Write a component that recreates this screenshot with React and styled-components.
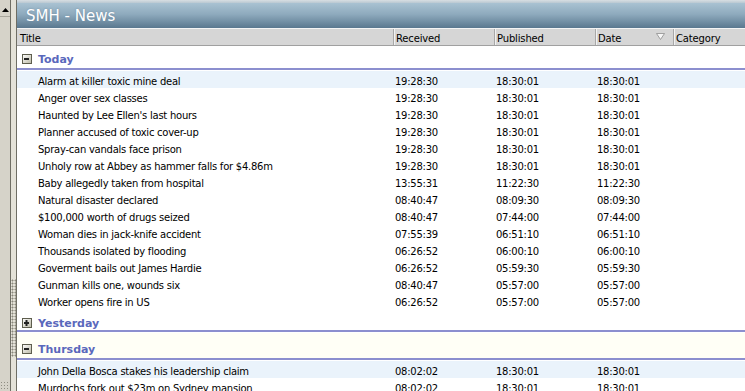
import React from "react";
import styled, { createGlobalStyle } from "styled-components";

const Global = createGlobalStyle`
  html, body { margin: 0; padding: 0; background: #fff; overflow: hidden; }
  body { font-family: "DejaVu Sans", "Liberation Sans", sans-serif; }
`;

const Shell = styled.div`
  display: flex;
  width: 745px;
  height: 391px;
  overflow: hidden;
`;

const SideStrip = styled.div`
  width: 10px;
  background: #d6d3c9;
  display: flex;
  flex-direction: column;
  justify-content: space-between;
  border-right: 1px solid #6f6e64;
`;

const ScrollBtn = styled.div`
  height: 12px;
  display: flex;
  align-items: center;
  justify-content: center;
  border-bottom: 1px solid #a8a69c;
  margin-top: 4px;
`;

const SizeGrip = styled.div`
  height: 10px;
  background-image: radial-gradient(circle, #8f8d82 0.7px, transparent 1px);
  background-size: 3px 3px;
`;

const Splitter = styled.div`
  width: 5px;
  background: #e4e2d8;
  border-right: 1px solid #6f6e64;
  display: flex;
  flex-direction: column;
  justify-content: flex-end;
  padding-bottom: 34px;
`;

const Grip = styled.div`
  height: 78px;
  background-image: radial-gradient(circle, #8a887c 0.9px, transparent 1.1px);
  background-size: 3px 3px;
`;

const Panel = styled.div`
  flex: 1;
  display: flex;
  flex-direction: column;
  min-width: 0;
`;

const TopBand = styled.div`
  height: 3px;
  flex-shrink: 0;
  background: linear-gradient(#d8dee2, #b9c8d2);
`;

const TitleBar = styled.div`
  height: 25px;
  flex-shrink: 0;
  background: linear-gradient(#a9c2d2 0%, #8eaabd 45%, #5a788f 100%);
  display: flex;
  align-items: center;
  padding-left: 9px;
  color: #fff;
  font-family: "DejaVu Sans", sans-serif;
  font-size: 15px;
  text-shadow: 0 0 2px #6d8aa0;
`;

const cols = "376px 101px 101px 78px 1fr";

const HeaderRow = styled.div`
  display: grid;
  flex-shrink: 0;
  grid-template-columns: ${cols};
  height: 16px;
  background: #d6d6d6;
  border-top: 1px solid #f4f4f4;
  border-bottom: 1px solid #a0a0a0;
  font-size: 10px;
  letter-spacing: -0.15px;
  color: #000;
`;

const HeaderCell = styled.div`
  display: flex;
  align-items: center;
  padding: 2px 0 0 ${(p) => (p.$first ? 3 : 2)}px;
  border-left: ${(p) => (p.$first ? "none" : "1px solid #a8a8a8")};
  box-shadow: ${(p) => (p.$first ? "none" : "inset 1px 0 0 #f2f2f2")};
  position: relative;
`;

const SortIcon = styled.svg`
  position: absolute;
  right: 8px;
  top: 4px;
`;

const Body = styled.div`
  display: flex;
  flex-direction: column;
  font-size: 10px;
  letter-spacing: -0.25px;
  color: #000;
`;

const GroupRow = styled.div`
  height: ${(p) => p.$h}px;
  flex-shrink: 0;
  display: flex;
  align-items: flex-end;
  padding: 0 0 ${(p) => p.$pb}px 5px;
  margin-bottom: 1px;
  gap: 6px;
  box-sizing: border-box;
  border-bottom: 2px solid #8c8fcf;
  background: ${(p) => (p.$tint ? "#fffff6" : "#fff")};
  letter-spacing: 0;
`;

const Toggle = styled.svg`
  flex-shrink: 0;
  margin-bottom: 2px;
`;

const GroupLabel = styled.span`
  font-weight: bold;
  font-size: 11px;
  color: #5a68bc;
`;

const Row = styled.div`
  display: grid;
  flex-shrink: 0;
  grid-template-columns: ${cols};
  height: 17px;
  box-sizing: border-box;
  padding-top: 3px;
  align-items: center;
  background: ${(p) => (p.$hl ? "#eaf3fb" : "#fff")};
`;

const Cell = styled.div`
  padding-left: ${(p) => (p.$first ? 21 : 2)}px;
  white-space: nowrap;
  overflow: visible;
`;

const today = [
  ["Alarm at killer toxic mine deal", "19:28:30", "18:30:01", "18:30:01"],
  ["Anger over sex classes", "19:28:30", "18:30:01", "18:30:01"],
  ["Haunted by Lee Ellen's last hours", "19:28:30", "18:30:01", "18:30:01"],
  ["Planner accused of toxic cover-up", "19:28:30", "18:30:01", "18:30:01"],
  ["Spray-can vandals face prison", "19:28:30", "18:30:01", "18:30:01"],
  ["Unholy row at Abbey as hammer falls for $4.86m", "19:28:30", "18:30:01", "18:30:01"],
  ["Baby allegedly taken from hospital", "13:55:31", "11:22:30", "11:22:30"],
  ["Natural disaster declared", "08:40:47", "08:09:30", "08:09:30"],
  ["$100,000 worth of drugs seized", "08:40:47", "07:44:00", "07:44:00"],
  ["Woman dies in jack-knife accident", "07:55:39", "06:51:10", "06:51:10"],
  ["Thousands isolated by flooding", "06:26:52", "06:00:10", "06:00:10"],
  ["Goverment bails out James Hardie", "06:26:52", "05:59:30", "05:59:30"],
  ["Gunman kills one, wounds six", "08:40:47", "05:57:00", "05:57:00"],
  ["Worker opens fire in US", "06:26:52", "05:57:00", "05:57:00"],
];

const thursday = [
  ["John Della Bosca stakes his leadership claim", "08:02:02", "18:30:01", "18:30:01"],
  ["Murdochs fork out $23m on Sydney mansion", "08:02:02", "18:30:01", "18:30:01"],
];

function Rows({ data }) {
  return data.map((r, i) => (
    <Row key={i} $hl={i === 0}>
      <Cell $first>{r[0]}</Cell>
      <Cell>{r[1]}</Cell>
      <Cell>{r[2]}</Cell>
      <Cell>{r[3]}</Cell>
      <Cell />
    </Row>
  ));
}

function ToggleIcon({ open }) {
  return (
    <Toggle width="10" height="10" viewBox="0 0 10 10">
      <defs>
        <linearGradient id={open ? "tgo" : "tgc"} x1="0" y1="0" x2="1" y2="1">
          <stop offset="0" stopColor="#ffffff" />
          <stop offset="1" stopColor="#b9b7a4" />
        </linearGradient>
      </defs>
      <rect x="0.5" y="0.5" width="9" height="9" fill={`url(#${open ? "tgo" : "tgc"})`} stroke="#5e5e4e" />
      <rect x="2" y="4" width="5" height="2" fill="#222" />
      {!open && <rect x="3.5" y="2" width="2" height="6" fill="#222" />}
    </Toggle>
  );
}

function Group({ label, open, h, pb, tint }) {
  return (
    <GroupRow $h={h} $pb={pb} $tint={tint}>
      <ToggleIcon open={open} />
      <GroupLabel>{label}</GroupLabel>
    </GroupRow>
  );
}

export default function App() {
  return (
    <>
      <Global />
      <Shell>
        <SideStrip>
          <ScrollBtn>
            <svg width="7" height="4" viewBox="0 0 7 4">
              <path d="M0 4 L3.5 0 L7 4 Z" fill="#000" />
            </svg>
          </ScrollBtn>
          <SizeGrip />
        </SideStrip>
        <Splitter>
          <Grip />
        </Splitter>
        <Panel>
          <TopBand />
          <TitleBar>SMH - News</TitleBar>
          <HeaderRow>
            <HeaderCell $first>Title</HeaderCell>
            <HeaderCell>Received</HeaderCell>
            <HeaderCell>Published</HeaderCell>
            <HeaderCell>
              Date
              <SortIcon width="9" height="7" viewBox="0 0 9 7">
                <path d="M0.5 0.5 H8.5 L4.5 6.5 Z" fill="#f6f6f6" stroke="#8e8e8e" strokeWidth="0.8" />
              </SortIcon>
            </HeaderCell>
            <HeaderCell>Category</HeaderCell>
          </HeaderRow>
          <Body>
            <Group label="Today" open h={24} pb={2} />
            <Rows data={today} />
            <Group label="Yesterday" h={23} pb={0} />
            <Group label="Thursday" open h={27} pb={2} tint />
            <Rows data={thursday} />
          </Body>
        </Panel>
      </Shell>
    </>
  );
}
